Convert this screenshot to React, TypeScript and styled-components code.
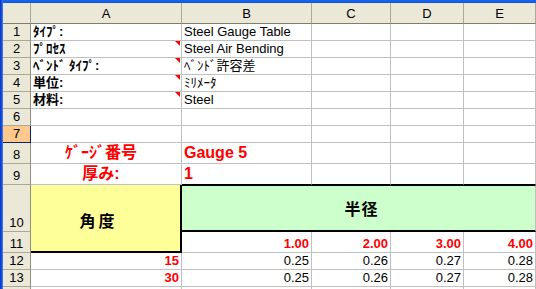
import React from "react";
import styled, { createGlobalStyle, css } from "styled-components";

const GlobalStyle = createGlobalStyle`
  html, body {
    margin: 0;
    padding: 0;
    background: #ffffff;
    overflow: hidden;
  }
  body {
    font-family: "Liberation Sans", "Noto Sans CJK JP", sans-serif;
  }
`;

type Align = "left" | "center" | "right";

type CellData = {
  text?: string;
  align?: Align;
  bold?: boolean;
  red?: boolean;
  size?: number;
  comment?: boolean;
  edgeBottom?: boolean;
};

const COLS = ["A", "B", "C", "D", "E"];

const Sheet = styled.div`
  display: grid;
  grid-template-columns: 3px 28px 151px 130px 79px 73px 72px;
  grid-template-rows: 3px 21px repeat(7, 17px) 21px 21px 47px 21px 17px 17px 17px;
  width: 536px;
  height: 289px;
  overflow: hidden;
  background: #fff;
  font-size: 13px;
  color: #000;
`;

const FrameLeft = styled.div`
  grid-column: 1;
  grid-row: 1 / -1;
  background: linear-gradient(to right, #0831c6, #1b5be6 70%, #5f8ff0);
`;

const FrameTop = styled.div`
  grid-column: 2 / -1;
  grid-row: 1;
  background: linear-gradient(to bottom, #1e64f0, #0b55e6);
`;

const Corner = styled.div`
  background: #ebe8d8;
  border-right: 1px solid #aca899;
  border-bottom: 1px solid #7f7d70;
  box-sizing: border-box;
`;

const ColHead = styled.div`
  background: #ebe8d8;
  border-right: 1px solid #aca899;
  border-bottom: 1px solid #7f7d70;
  box-sizing: border-box;
  display: flex;
  align-items: center;
  justify-content: center;
  font-size: 13px;
`;

const RowHead = styled.div<{ $active?: boolean }>`
  background: #ebe8d8;
  border-right: 1px solid #8f8d80;
  border-bottom: 1px solid #aca899;
  box-sizing: border-box;
  display: flex;
  align-items: flex-end;
  justify-content: center;
  padding-bottom: 1px;
  font-size: 13px;
  line-height: 15px;
  ${(p) =>
    p.$active &&
    css`
      background: #ffc88c;
      border-right-color: #0a246a;
      border-bottom-color: #0a246a;
    `}
`;

const Cell = styled.div<{
  $align?: Align;
  $bold?: boolean;
  $red?: boolean;
  $size?: number;
  $edgeBottom?: boolean;
}>`
  position: relative;
  box-sizing: border-box;
  border-right: 1px solid #c0c0c0;
  border-bottom: 1px solid ${(p) => (p.$edgeBottom ? "#000" : "#c0c0c0")};
  display: flex;
  align-items: flex-end;
  justify-content: ${(p) =>
    p.$align === "right" ? "flex-end" : p.$align === "center" ? "center" : "flex-start"};
  padding: 0 2px 1px 2px;
  ${(p) => p.$align === "center" && "padding-right: 12px;"}
  white-space: nowrap;
  overflow: hidden;
  font-size: ${(p) => p.$size ?? 13}px;
  line-height: ${(p) => (p.$size ?? 13) + 2}px;
  font-weight: ${(p) => (p.$bold ? 700 : 400)};
  color: ${(p) => (p.$red ? "#ff0000" : "#000")};
`;

const CommentMark = styled.span`
  position: absolute;
  top: 0;
  right: 1px;
  width: 0;
  height: 0;
  border-top: 5px solid #ff0000;
  border-left: 5px solid transparent;
`;

const AngleBlock = styled.div`
  grid-row: span 2;
  box-sizing: border-box;
  background: #ffff99;
  border-right: 2px solid #000;
  border-bottom: 2px solid #000;
  display: flex;
  align-items: center;
  justify-content: center;
  padding-right: 14px;
  padding-top: 3px;
  font-size: 16px;
  font-weight: 700;
  letter-spacing: 3px;
`;

const RadiusBlock = styled.div`
  grid-column: span 4;
  box-sizing: border-box;
  background: #ccffcc;
  border-top: 1px solid #000;
  border-bottom: 2px solid #000;
  border-right: 1px solid #c0c0c0;
  display: flex;
  align-items: center;
  justify-content: center;
  padding-left: 6px;
  font-size: 16px;
  font-weight: 700;
  letter-spacing: 1px;
`;

const info: [string, string, boolean][] = [
  ["ﾀｲﾌﾟ:", "Steel Gauge Table", false],
  ["ﾌﾟﾛｾｽ", "Steel Air Bending", true],
  ["ﾍﾞﾝﾄﾞ ﾀｲﾌﾟ:", "ﾍﾞﾝﾄﾞ許容差", true],
  ["単位:", "ﾐﾘﾒｰﾀ", true],
  ["材料:", "Steel", true],
];

const empty = (n: number): CellData[] => Array.from({ length: n }, () => ({}));

const renderCells = (cells: CellData[], key: string) =>
  cells.map((c, i) => (
    <Cell
      key={`${key}-${i}`}
      $align={c.align}
      $bold={c.bold}
      $red={c.red}
      $size={c.size}
      $edgeBottom={c.edgeBottom}
    >
      {c.text}
      {c.comment && <CommentMark />}
    </Cell>
  ));

export default function App() {
  const radii = ["1.00", "2.00", "3.00", "4.00"];
  const values = ["0.25", "0.26", "0.27", "0.28"];

  const simpleRows: { n: number; cells: CellData[] }[] = [
    ...info.map(([label, value, comment], i) => ({
      n: i + 1,
      cells: [
        { text: label, bold: true, comment },
        { text: value },
        ...empty(3),
      ],
    })),
    { n: 6, cells: empty(5) },
    { n: 7, cells: empty(5) },
    {
      n: 8,
      cells: [
        { text: "ｹﾞｰｼﾞ番号", align: "center", bold: true, red: true, size: 16 },
        { text: "Gauge 5", bold: true, red: true, size: 16 },
        ...empty(3),
      ],
    },
    {
      n: 9,
      cells: [
        { text: "厚み:", align: "center", bold: true, red: true, size: 16 },
        { text: "1", bold: true, red: true, size: 16, edgeBottom: true },
        ...empty(3).map((c) => ({ ...c, edgeBottom: true })),
      ],
    },
  ];

  return (
    <>
      <GlobalStyle />
      <Sheet>
        <FrameLeft />
        <FrameTop />
        <Corner />
        {COLS.map((c) => (
          <ColHead key={c}>{c}</ColHead>
        ))}

        {simpleRows.map((r) => (
          <React.Fragment key={r.n}>
            <RowHead $active={r.n === 7}>{r.n}</RowHead>
            {renderCells(r.cells, `r${r.n}`)}
          </React.Fragment>
        ))}

        <RowHead>10</RowHead>
        <AngleBlock>角度</AngleBlock>
        <RadiusBlock>半径</RadiusBlock>

        <RowHead>11</RowHead>
        {renderCells(
          radii.map((t) => ({ text: t, align: "right" as Align, bold: true, red: true })),
          "r11"
        )}

        {[15, 30].map((deg, i) => (
          <React.Fragment key={deg}>
            <RowHead>{12 + i}</RowHead>
            {renderCells(
              [
                { text: String(deg), align: "right", bold: true, red: true },
                ...values.map((v) => ({ text: v, align: "right" as Align })),
              ],
              `r${12 + i}`
            )}
          </React.Fragment>
        ))}

        {/* row 14 only peeks in at the bottom edge */}
        <RowHead />
        {renderCells(empty(5), "r14")}
      </Sheet>
    </>
  );
}
